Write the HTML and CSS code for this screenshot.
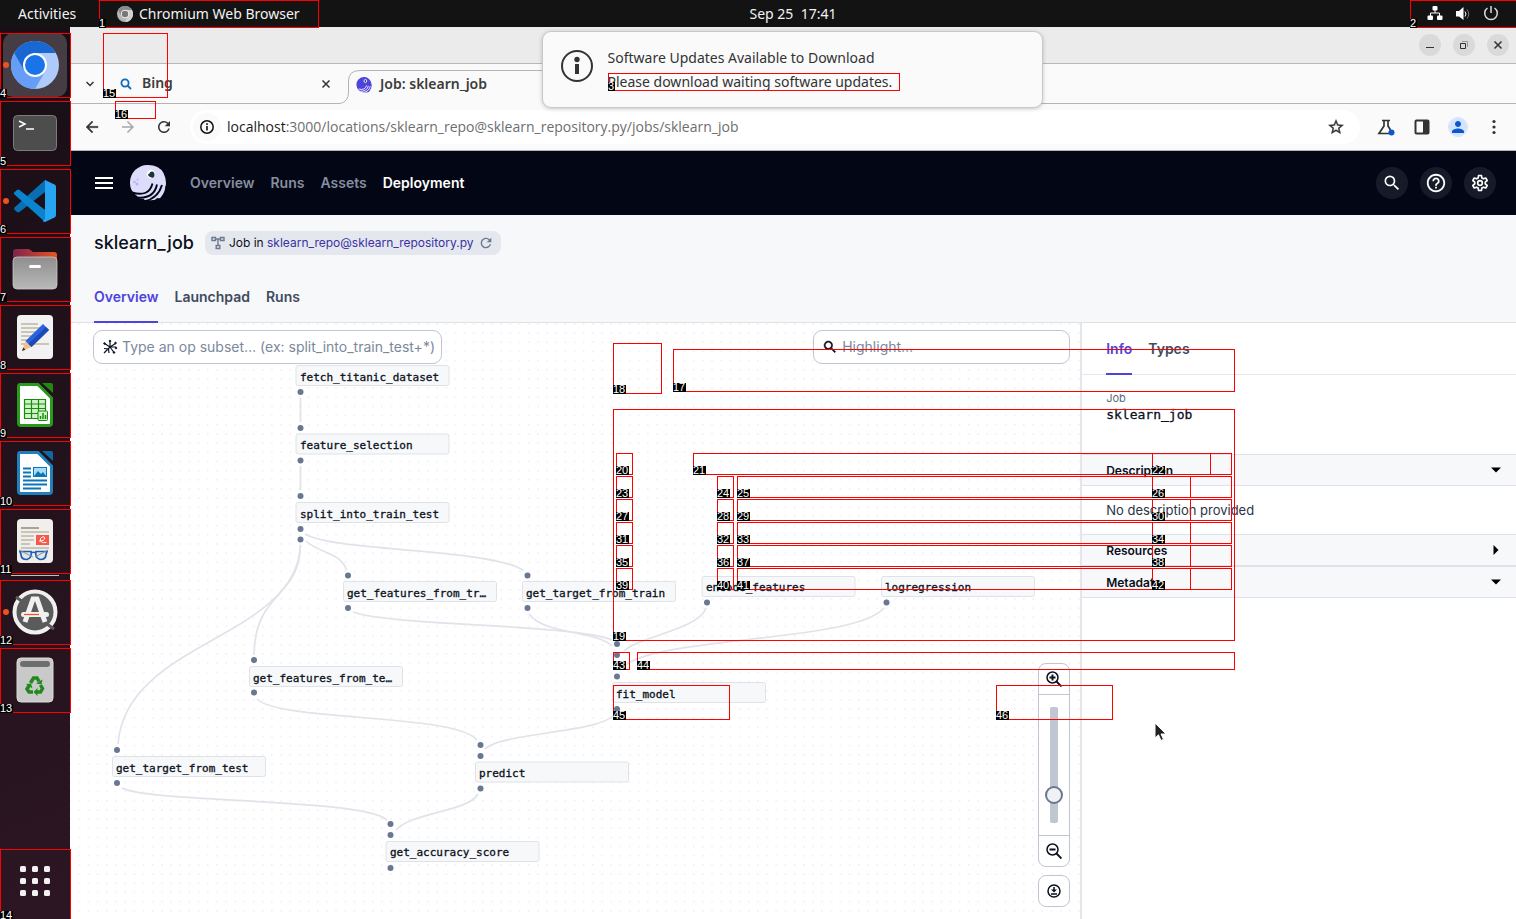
FILE: index.html
```html
<!DOCTYPE html>
<html lang="en">
<head>
    <meta charset="UTF-8">
    <meta name="viewport" content="width=device-width, initial-scale=1.0">
    <title>Job: sklearn_job</title>
    <link rel="stylesheet" href="styles.css">
</head>
<body>
    <header class="topbar">
        <button class="activities">Activities</button>
        <button class="app-menu">
            <svg width="16" height="16" viewBox="0 0 16 16"><circle cx="8" cy="8" r="8" fill="#b5b5b5"/><path d="M1 4A8 8 0 0 1 15 4H8v4l-3.500 2z" fill="#8a8a8a"/><path d="M15 4A8 8 0 0 1 8 16l3.500-6L8 4z" fill="#d2d2d2"/><circle cx="8" cy="8" r="4.200" fill="#eee"/><circle cx="8" cy="8" r="3.200" fill="#777"/></svg>
            Chromium Web Browser
        </button>
        <span class="clock">Sep 25&nbsp; 17:41</span>
        <button class="tray" aria-label="System menu">
            <svg width="16" height="16" viewBox="0 0 16 16" fill="#fff"><rect x="5.500" y="0" width="5" height="4.500" rx="1"/><rect x="0.500" y="9.500" width="5.500" height="4.500" rx="1"/><rect x="10" y="9.500" width="5.500" height="4.500" rx="1"/><path d="M8 4v3M3.500 10V7h9v3" stroke="#fff" fill="none"/></svg>
            <svg width="16" height="16" viewBox="0 0 16 16" fill="#fff"><path d="M1 5h3L8.500 1v13L4 10.500H1z"/><path d="M10 5.500q2 2.500 0 5" stroke="#fff" fill="none"/><path d="M12 3.500q3.500 4.500 0 9" stroke="#777" fill="none"/></svg>
            <svg width="16" height="16" viewBox="0 0 16 16" fill="none" stroke="#ddd" stroke-width="1.500"><path d="M8 0v7M4.500 2A6.300 6.300 0 1 0 11.500 2"/></svg>
        </button>
    </header>

    <div class="desktop">
        <nav class="dock">
            <button class="dock-item focused running" aria-label="Chromium">
                <svg width="48" height="48" viewBox="0 0 48 48"><circle cx="24" cy="24" r="24" fill="#aecbfa"/><path d="M3.200 12A24 24 0 0 0 24 48L34.400 30 24 24z" fill="#669df6"/><path d="M3.200 12A24 24 0 0 1 44.800 12H24v12L13.600 30z" fill="#1967d2"/><circle cx="24" cy="24" r="12" fill="#fff"/><circle cx="24" cy="24" r="10" fill="#1a73e8"/></svg>
            </button>
            <button class="dock-item" aria-label="Terminal">
                <svg width="48" height="48" viewBox="0 0 48 48"><rect x="2.500" y="6.500" width="43" height="35" rx="4" fill="#4d4d4d" stroke="#7c7c7c"/><path d="M8 12l6 3-6 3M15 20h8" stroke="#fff" stroke-width="1.500" fill="none"/></svg>
            </button>
            <button class="dock-item running" aria-label="Visual Studio Code">
                <svg width="48" height="48" viewBox="0 0 48 48"><path d="M34 3L3.500 30.500q-1 1.200 0 2.200L6 35q1.200.800 2.500 0L34 15z" fill="#0a6eb4"/><path d="M34 45L3.500 17.500q-1-1.200 0-2.200L6 13q1.200-.800 2.500 0L34 33z" fill="#0b84d0"/><path d="M34 3l9.500 4.500q1.500.800 1.500 2.500v28q0 1.700-1.500 2.500L34 45z" fill="#27a4f2"/><path d="M34 3v42q-1 .200-2.200-1l2.200-2z" fill="#27a4f2"/></svg>
            </button>
            <button class="dock-item" aria-label="Files">
                <svg width="48" height="48" viewBox="0 0 48 48"><defs><linearGradient id="folder"><stop offset="0" stop-color="#7b2352"/><stop offset="1" stop-color="#e95420"/></linearGradient><linearGradient id="gray" x2="0" y2="1"><stop offset="0" stop-color="#8e8e8e"/><stop offset="1" stop-color="#b9b9b9"/></linearGradient></defs><path d="M2 20V7q0-3 3-3h12q2 0 3 1.500L22 7h21q3 0 3 3v10z" fill="url(#folder)"/><rect x="2" y="12" width="44" height="32" rx="4" fill="url(#gray)" stroke="#c8c8c8" stroke-width=".800"/><rect x="18" y="20" width="12" height="3" rx="1.500" fill="#fff"/></svg>
            </button>
            <button class="dock-item" aria-label="Text Editor">
                <svg width="48" height="48" viewBox="0 0 48 48"><rect x="6" y="2" width="36" height="44" rx="4" fill="#f2f2f2"/><path d="M10 11h17M10 15h24M10 19h20M10 23h18M10 27h12M10 31h28" stroke="#c9c6b8" stroke-width="2"/><path d="M11 38l3.500-10 6 6z" fill="#f4c08a"/><path d="M14.500 28L32 11l6 6-17.500 17z" fill="#2a62e0"/><path d="M17.500 31L35 14l3 3-17.500 17z" fill="#1b49b5"/><path d="M11 38l1.200-3.500 2.300 2.300z" fill="#333"/></svg>
            </button>
            <button class="dock-item" aria-label="LibreOffice Calc">
                <svg width="48" height="48" viewBox="0 0 48 48"><path d="M9 3.500h18L40.500 17v25q0 2.500-2.500 2.500H10q-2.500 0-2.500-2.500V6q0-2.500 1.500-2.500z" fill="#fff" stroke="#2a9a1c" stroke-width="3"/><path d="M31 2h9q2 0 2 2v8z" fill="#23880f"/><rect x="13" y="18" width="22" height="20" fill="#ccf4c6"/><path d="M13.500 18.500h21v19h-21zM13.500 23h21M13.500 27.500h21M13.500 32.500h21M20.500 18.500v19M27.500 18.500v19" stroke="#1c8a0d" fill="none" stroke-width="1.200"/><rect x="27" y="30" width="9.500" height="9.500" rx="1" fill="#ccf4c6" stroke="#1c8a0d"/><path d="M29.500 38v-3M32 38v-6M34.500 38v-4" stroke="#1c8a0d" stroke-width="1.500"/></svg>
            </button>
            <button class="dock-item" aria-label="LibreOffice Writer">
                <svg width="48" height="48" viewBox="0 0 48 48"><path d="M9 3.500h18L40.500 17v25q0 2.500-2.500 2.500H10q-2.500 0-2.500-2.500V6q0-2.500 1.500-2.500z" fill="#fff" stroke="#1f80bd" stroke-width="3"/><path d="M31 2h9q2 0 2 2v8z" fill="#0f69a5"/><path d="M12 19.500h8M12 23.500h8M12 27.500h8M12 31.500h24M12 35.500h24M12 39.500h18" stroke="#0a75b8" stroke-width="2"/><rect x="22.500" y="18.500" width="13" height="9" fill="#a8dcf8" stroke="#0a75b8"/><path d="M23 27l4-5 3 3 2-2 3 4z" fill="#0a75b8"/></svg>
            </button>
            <button class="dock-item" aria-label="Document Viewer">
                <svg width="48" height="48" viewBox="0 0 48 48"><rect x="6" y="2" width="36" height="44" rx="4" fill="#f0efee"/><path d="M10 11h18" stroke="#ada28f" stroke-width="2"/><path d="M10 15h28M10 19h13M10 23h13M10 27h9M10 31h28" stroke="#c9c6b8" stroke-width="2"/><rect x="25" y="18" width="13" height="10" fill="#f6584c"/><path d="M28 24q6 0 5.500-3t-4 .500q-1 5 6 4" stroke="#fff" fill="none"/><path d="M9 34.500h11q1.500 6-4 8-6 0-6-5zM36 34.500H25q-1.500 6 4 8 6 0 6-5zM20 36q2.500-1.500 5 0" stroke="#1d5fb4" stroke-width="1.700" fill="#e3e6ea"/><path d="M8 33l14 7M37 33l-13 7" stroke="#8b9097" stroke-width="1"/></svg>
            </button>
            <hr class="dock-line">
            <button class="dock-item running" aria-label="Software Updater">
                <svg width="48" height="48" viewBox="0 0 48 48"><circle cx="24" cy="24" r="20.500" fill="#5b5b5b" stroke="#f0f0f0" stroke-width="4"/><path d="M5 9l7 5M36 36l7 5" stroke="#5b5b5b" stroke-width="3"/><path d="M14 34l8-23h4l8 23" stroke="#f0f0f0" stroke-width="5" fill="none"/><rect x="10" y="24" width="28" height="5" rx="2.500" fill="#f0f0f0"/><path d="M13 26.500h15" stroke="#e95420" stroke-width="1.200"/></svg>
            </button>
            <button class="dock-item" aria-label="Trash">
                <svg width="48" height="48" viewBox="0 0 48 48"><rect x="6" y="2" width="36" height="44" rx="4" fill="#c9c9c9" stroke="#dadada"/><rect x="9" y="5" width="30" height="6" rx="3" fill="#6e6e6e"/><g fill="none" stroke="#23891c" stroke-width="3.500"><path d="M19.500 27l3-5h3.500l2 3.500"/><path d="M29.500 29l2 3.500-2 3.500h-4"/><path d="M22 36h-4l-2-3 2.500-4"/></g><path d="M25 27.500l5.500 1 1-5zM26.500 32v8l-4-4zM15 28l5-.500 1.500 5z" fill="#23891c"/></svg>
            </button>
            <button class="dock-item show-apps" aria-label="Show Applications">
                <svg width="30" height="30" viewBox="0 0 30 30" fill="#f2f2f2"><rect width="6" height="6" rx="1.500"/><rect x="12" width="6" height="6" rx="1.500"/><rect x="24" width="6" height="6" rx="1.500"/><rect y="12" width="6" height="6" rx="1.500"/><rect x="12" y="12" width="6" height="6" rx="1.500"/><rect x="24" y="12" width="6" height="6" rx="1.500"/><rect y="24" width="6" height="6" rx="1.500"/><rect x="12" y="24" width="6" height="6" rx="1.500"/><rect x="24" y="24" width="6" height="6" rx="1.500"/></svg>
            </button>
        </nav>

        <div class="window">
            <div class="titlebar">
                <button aria-label="Minimize"><svg width="10" height="10" viewBox="0 0 10 10"><path d="M1 7.500h8" stroke="#333"/></svg></button>
                <button aria-label="Restore"><svg width="10" height="10" viewBox="0 0 10 10" fill="none"><path d="M1.500 3.500h5v5h-5z" stroke="#333"/><path d="M3 1.500h5.500V7" stroke="#999"/></svg></button>
                <button aria-label="Close"><svg width="10" height="10" viewBox="0 0 10 10"><path d="M1.500 1.500l7 7M8.500 1.500l-7 7" stroke="#333" stroke-width="1.500"/></svg></button>
            </div>

            <div class="tabstrip">
                <div class="tab tab-idle">
                    <button class="plain" aria-label="Search tabs"><svg width="10" height="10" viewBox="0 0 10 10"><path d="M1.500 3L5 6.500 8.500 3" stroke="#333" stroke-width="1.500" fill="none"/></svg></button>
                    <svg class="tab-icon" width="12" height="12" viewBox="0 0 12 12" fill="none" stroke="#0f6cbd" stroke-width="1.800"><circle cx="5" cy="5" r="3.600"/><path d="M7.500 7.500L11 11"/></svg>
                    <span class="tab-name">Bing</span>
                    <button class="plain tab-close" aria-label="Close tab"><svg width="10" height="10" viewBox="0 0 10 10"><path d="M1.500 1.500l7 7M8.500 1.500l-7 7" stroke="#333" stroke-width="1.500"/></svg></button>
                </div>
                <svg class="tab-curve" width="20" height="34" viewBox="0 0 20 34" fill="none" stroke="#b4b4b4"><path d="M0 33.500Q8.500 32 8.500 22V11Q8.500.500 20 .500"/></svg>
                <div class="tab tab-active">
                    <svg width="16" height="16" viewBox="0 0 36 36"><path d="M1 18A17 17 0 0 1 35 16q1 9-4 15l-2 3q-8 2-12 1Q2 31 1 18z" fill="#4f43dd"/><path d="M6 27q14 4 18-8M10 32q14 1 18-12M17 35q12-2 15-14" stroke="#fff" stroke-width="2" fill="none"/><circle cx="21" cy="9" r="4" fill="#fff"/><circle cx="21" cy="9" r="2" fill="#163b36"/></svg>
                    <span class="tab-name">Job: sklearn_job</span>
                </div>
                <div class="tab tab-rest"></div>
            </div>

            <div class="toolbar">
                <button class="plain" aria-label="Back"><svg width="18" height="18" viewBox="0 0 24 24" fill="#333" stroke="#333" stroke-width=".500"><path d="M20 11H7.830l5.590-5.590L12 4l-8 8 8 8 1.410-1.410L7.830 13H20v-2z"/></svg></button>
                <button class="plain" aria-label="Forward"><svg width="18" height="18" viewBox="0 0 24 24" fill="#a8a8a8"><path d="M4 11h12.170l-5.590-5.590L12 4l8 8-8 8-1.410-1.410L16.170 13H4v-2z"/></svg></button>
                <button class="plain" aria-label="Reload"><svg width="18" height="18" viewBox="0 0 24 24" fill="#333"><path d="M17.650 6.350A7.958 7.958 0 0 0 12 4c-4.420 0-7.990 3.580-7.990 8s3.570 8 7.990 8c3.730 0 6.840-2.550 7.730-6h-2.080A5.990 5.990 0 0 1 12 18c-3.310 0-6-2.690-6-6s2.690-6 6-6c1.660 0 3.140.690 4.220 1.780L13 11h7V4l-2.350 2.350z"/></svg></button>
                <div class="omnibox">
                    <button class="plain site-info" aria-label="Site information"><svg width="14" height="14" viewBox="0 0 14 14"><circle cx="7" cy="7" r="6.200" fill="none" stroke="#111" stroke-width="1.500"/><path d="M7 6v4.500M7 3.300V5" stroke="#111" stroke-width="1.600"/></svg></button>
                    <span class="url"><b>localhost</b>:3000/locations/sklearn_repo@sklearn_repository.py/jobs/sklearn_job</span>
                    <button class="plain" aria-label="Bookmark"><svg width="18" height="18" viewBox="0 0 24 24" fill="#333" stroke="#333" stroke-width=".500"><path d="M22 9.240l-7.190-.620L12 2 9.190 8.630 2 9.240l5.460 4.730L5.820 21 12 17.270 18.180 21l-1.630-7.030L22 9.240zM12 15.400l-3.760 2.270 1-4.280-3.320-2.880 4.380-.380L12 6.100l1.710 4.040 4.380.380-3.320 2.880 1 4.280L12 15.400z"/></svg></button>
                </div>
                <div class="tools">
                    <button class="plain" aria-label="Labs"><svg width="18" height="18" viewBox="0 0 18 18"><path d="M5 2.500h8M7 2.500V8L2 15.500h10M11 2.500V8l2.500 4" stroke="#333" stroke-width="1.700" fill="none"/><circle cx="14.500" cy="14.500" r="3" fill="#0b57d0"/></svg></button>
                    <button class="plain" aria-label="Side panel"><svg width="18" height="18" viewBox="0 0 18 18"><rect x="2.500" y="2.500" width="13" height="13" rx="1" fill="none" stroke="#333" stroke-width="2"/><path d="M10 2h6v14h-6z" fill="#333"/></svg></button>
                    <button class="plain avatar" aria-label="Profile"><svg width="18" height="18" viewBox="0 0 24 24" fill="#0b57d0"><path d="M12 12c2.210 0 4-1.790 4-4s-1.790-4-4-4-4 1.790-4 4 1.790 4 4 4zm0 2c-2.670 0-8 1.340-8 4v2h16v-2c0-2.660-5.330-4-8-4z"/></svg></button>
                    <button class="plain" aria-label="Menu"><svg width="18" height="18" viewBox="0 0 18 18" fill="#333"><circle cx="9" cy="3.500" r="1.600"/><circle cx="9" cy="9" r="1.600"/><circle cx="9" cy="14.500" r="1.600"/></svg></button>
                </div>
            </div>

            <header class="app-header">
                <button class="plain" aria-label="Navigation"><svg width="18" height="12" viewBox="0 0 18 12" fill="#fff"><path d="M0 0h18v2H0zM0 5h18v2H0zM0 10h18v2H0z"/></svg></button>
                <svg class="logo" width="36" height="36" viewBox="0 0 36 36"><path d="M0 18A17.500 17.500 0 0 1 18 0q11 0 15.500 8Q36 13 36 18q0 8-5 14-1 2-3 1l-1.500.500q-2 2-3 1.500l-8 .800-2-2-5-.800-2-2.500Q0 26 0 18z" fill="#dedcfb"/><path d="M2 27.500q17 5 20.500-9M7 32.500q17 1.500 20-13M14 36.500q14-3 18-16.500" stroke="#030615" stroke-width="1.900" fill="none"/><path d="M32.500 33Q36.500 27 36 21" stroke="#030615" stroke-width="1.500" fill="none"/><circle cx="21" cy="9" r="4.200" fill="#fff"/><path d="M18 10q0-1.500 1.500-1.500 0-2 2.500-2t2.500 3.500-3 2.500-3.500-2.500z" fill="#163b36"/><g fill="#b9b4f5"><circle cx="4.500" cy="17" r="1.300"/><circle cx="7.500" cy="14.500" r="1"/><circle cx="7" cy="19" r="1.500"/></g></svg>
                <nav class="app-nav">
                    <a href="#">Overview</a>
                    <a href="#">Runs</a>
                    <a href="#">Assets</a>
                    <a href="#" class="current">Deployment</a>
                </nav>
                <div class="round-buttons">
                    <button aria-label="Search"><svg width="20" height="20" viewBox="0 0 24 24" fill="#fff"><path d="M15.500 14h-.790l-.280-.270A6.471 6.471 0 0 0 16 9.500 6.500 6.500 0 1 0 9.500 16c1.610 0 3.090-.590 4.230-1.570l.270.280v.790l5 4.990L20.490 19l-4.990-5zm-6 0C7.010 14 5 11.990 5 9.500S7.010 5 9.500 5 14 7.010 14 9.500 11.990 14 9.500 14z"/></svg></button>
                    <button aria-label="Help"><svg width="22" height="22" viewBox="0 0 24 24" fill="#fff"><path d="M11 18h2v-2h-2v2zm1-16C6.480 2 2 6.480 2 12s4.480 10 10 10 10-4.480 10-10S17.520 2 12 2zm0 18c-4.410 0-8-3.590-8-8s3.590-8 8-8 8 3.590 8 8-3.590 8-8 8zm0-14c-2.210 0-4 1.790-4 4h2c0-1.100.900-2 2-2s2 .900 2 2c0 2-3 1.750-3 5h2c0-2.250 3-2.500 3-5 0-2.210-1.790-4-4-4z"/></svg></button>
                    <button aria-label="Settings"><svg width="20" height="20" viewBox="0 0 24 24" fill="none" stroke="#fff" stroke-width="2" stroke-linejoin="round"><path d="M10.300 3h3.400l.500 2.900 1.900 1.100 2.800-1 1.700 3-2.300 1.900v2.200l2.300 1.900-1.700 3-2.800-1-1.900 1.100-.500 2.900h-3.400l-.500-2.900L7.900 17l-2.800 1-1.700-3 2.300-1.900v-2.200L3.400 9l1.700-3 2.800 1 1.900-1.100z"/><circle cx="12" cy="12" r="2.800"/></svg></button>
                </div>
            </header>

            <div class="page-head">
                <div class="title-row">
                    <h1>sklearn_job</h1>
                    <div class="tag">
                        <svg width="14" height="14" viewBox="0 0 14 14" fill="none" stroke="#6b7890" stroke-width="1.400"><path d="M1 1.500h3.500v3H1zM9.500 1.500H13v3H9.500zM5.200 9.500h3.600v3H5.200zM4.500 3h5M7 3v6.500"/></svg>
                        <span>Job in <a href="#">sklearn_repo@sklearn_repository.py</a></span>
                        <button class="plain" aria-label="Reload location"><svg width="16" height="16" viewBox="0 0 24 24" fill="#6b7890"><path d="M17.650 6.350A7.958 7.958 0 0 0 12 4c-4.420 0-7.990 3.580-7.990 8s3.570 8 7.990 8c3.730 0 6.840-2.550 7.730-6h-2.080A5.990 5.990 0 0 1 12 18c-3.310 0-6-2.690-6-6s2.690-6 6-6c1.660 0 3.140.690 4.220 1.780L13 11h7V4l-2.350 2.350z"/></svg></button>
                    </div>
                </div>
                <nav class="page-tabs">
                    <a href="#" class="current">Overview</a>
                    <a href="#">Launchpad</a>
                    <a href="#">Runs</a>
                </nav>
            </div>

            <main class="content">
                <section class="canvas">
                    <svg class="graph" width="1010" height="596" viewBox="70 323 1010 596">
                        <defs>
                            <pattern id="dots" x="74.900" y="732" width="9.170" height="9.170" patternUnits="userSpaceOnUse"><circle cx="4.500" cy="4.500" r=".600" fill="#d5d8e0"/></pattern>
                        </defs>
                        <rect x="70" y="323" width="1010" height="596" fill="url(#dots)"/>
                        <g class="edges">
                            <path d="M300.500 398v24M300.500 466v24"/>
                            <path d="M305 534C335 552 490 548 523.500 570.500"/>
                            <path d="M306 541C318 553 341 552 346.500 570"/>
                            <path d="M300.500 545C299 600 255 590 254 655"/>
                            <path d="M300.500 545C296 640 126 640 118 744"/>
                            <path d="M353 612C390 626 575 624 612 640"/>
                            <path d="M529 614C545 635 595 630 612 646"/>
                            <path d="M706 608C698 630 640 636 624 651"/>
                            <path d="M884 608C856 642 660 636 624 666"/>
                            <path d="M613 716C595 733 500 733 485 749"/>
                            <path d="M257 699C280 722 455 713 477 740"/>
                            <path d="M122 788C150 803 362 798 387 820"/>
                            <path d="M478 794C468 812 412 812 396 830"/>
                        </g>
                        <g class="ports">
                            <circle cx="300.500" cy="392" r="3"/><circle cx="300.500" cy="428" r="3"/>
                            <circle cx="300.500" cy="460.500" r="3"/><circle cx="300.500" cy="496" r="3"/>
                            <circle cx="300.500" cy="529" r="3"/><circle cx="300.500" cy="539.500" r="3"/>
                            <circle cx="348" cy="575.500" r="3"/><circle cx="348" cy="608" r="3"/>
                            <circle cx="527.500" cy="575.500" r="3"/><circle cx="527.500" cy="608" r="3"/>
                            <circle cx="254" cy="660" r="3"/><circle cx="254" cy="692.500" r="3"/>
                            <circle cx="707" cy="602.500" r="3"/><circle cx="886.500" cy="602.500" r="3"/>
                            <circle cx="617" cy="644" r="3"/><circle cx="617" cy="655" r="3"/>
                            <circle cx="617" cy="666" r="3"/><circle cx="617" cy="676.500" r="3"/>
                            <circle cx="617" cy="709" r="3"/>
                            <circle cx="117" cy="750" r="3"/><circle cx="117" cy="783" r="3"/>
                            <circle cx="480.500" cy="745" r="3"/><circle cx="480.500" cy="756" r="3"/>
                            <circle cx="480.500" cy="788.500" r="3"/>
                            <circle cx="390.500" cy="824" r="3"/><circle cx="390.500" cy="835" r="3"/>
                            <circle cx="390.500" cy="868" r="3"/>
                        </g>
                        <g class="ops">
                            <rect x="296" y="365.500" width="153" height="20" rx="2"/><text x="300" y="381">fetch_titanic_dataset</text>
                            <rect x="296" y="434" width="153" height="20" rx="2"/><text x="300" y="449">feature_selection</text>
                            <rect x="296" y="502.500" width="153" height="20" rx="2"/><text x="300" y="518">split_into_train_test</text>
                            <rect x="343.500" y="581.500" width="153" height="20" rx="2"/><text x="347" y="597">get_features_from_tr…</text>
                            <rect x="522.500" y="581.500" width="153" height="20" rx="2"/><text x="526" y="597">get_target_from_train</text>
                            <rect x="249.500" y="666.500" width="153" height="20" rx="2"/><text x="253" y="682">get_features_from_te…</text>
                            <rect x="702" y="576.500" width="153" height="20" rx="2"/><text x="706" y="591">encode_features</text>
                            <rect x="881.500" y="576.500" width="153" height="20" rx="2"/><text x="885" y="591">logregression</text>
                            <rect x="612.500" y="682.500" width="153" height="20" rx="2"/><text x="616" y="698">fit_model</text>
                            <rect x="112.500" y="756.500" width="153" height="20" rx="2"/><text x="116" y="772">get_target_from_test</text>
                            <rect x="475.500" y="762" width="153" height="20" rx="2"/><text x="479" y="777">predict</text>
                            <rect x="386" y="841.500" width="153" height="20" rx="2"/><text x="390" y="856">get_accuracy_score</text>
                        </g>
                    </svg>

                    <div class="canvas-top">
                        <label class="field subset">
                            <svg width="16" height="16" viewBox="0 0 16 16" stroke="#0b1020" fill="#0b1020"><path d="M8 8V2M8 8L2.500 4.500M8 8l5.500-3.500M8 8h6M8 8l4 5.500M8 8l-6 6M2 9.500l4.500.500.500 4" stroke-width="1.200" fill="none"/><circle cx="8" cy="2" r=".800"/><circle cx="2.500" cy="4.500" r=".800"/><circle cx="13.500" cy="4" r=".800"/><circle cx="14" cy="9" r=".800"/><circle cx="12" cy="13.500" r=".800"/></svg>
                            <input type="text" aria-label="Op subset" placeholder="Type an op subset… (ex: split_into_train_test+*)">
                        </label>
                        <label class="field highlight">
                            <svg width="16" height="16" viewBox="0 0 24 24" fill="#0b1020" stroke="#0b1020" stroke-width=".700"><path d="M15.500 14h-.790l-.280-.270A6.471 6.471 0 0 0 16 9.500 6.500 6.500 0 1 0 9.500 16c1.610 0 3.090-.590 4.230-1.570l.270.280v.790l5 4.990L20.490 19l-4.990-5zm-6 0C7.010 14 5 11.990 5 9.500S7.010 5 9.500 5 14 7.010 14 9.500 11.990 14 9.500 14z"/></svg>
                            <input type="text" aria-label="Highlight" placeholder="Highlight…">
                        </label>
                    </div>

                    <div class="zoom-controls">
                        <div class="zoom-box">
                            <button aria-label="Zoom in"><svg width="16" height="16" viewBox="0 0 16 16" fill="none" stroke="#0b1020"><circle cx="6.500" cy="6.500" r="5.500" stroke-width="1.500"/><path d="M3.500 6.500h6M6.500 3.500v6M10.500 10.500l5 5" stroke-width="1.900"/></svg></button>
                            <div class="slider-wrap"><input type="range" aria-label="Zoom" min="0" max="100" value="19"></div>
                            <button aria-label="Zoom out"><svg width="16" height="16" viewBox="0 0 16 16" fill="none" stroke="#0b1020"><circle cx="6.500" cy="6.500" r="5.500" stroke-width="1.500"/><path d="M3.500 6.500h6M10.500 10.500l5 5" stroke-width="1.900"/></svg></button>
                        </div>
                        <button class="download" aria-label="Download"><svg width="14" height="14" viewBox="0 0 14 14" fill="none" stroke="#0b1020" stroke-width="1.500"><circle cx="7" cy="7" r="6"/><path d="M7 3v3M4 10h6"/><path d="M4 5.500h6L7 8.500z" fill="#0b1020" stroke="none"/></svg></button>
                    </div>
                </section>

                <aside class="side">
                    <nav class="side-tabs">
                        <a href="#" class="current">Info</a>
                        <a href="#">Types</a>
                    </nav>
                    <div class="job">
                        <div class="kind">Job</div>
                        <div class="job-name">sklearn_job</div>
                    </div>
                    <button class="section">Description<svg width="10" height="10" viewBox="0 0 10 10"><path d="M0 2.500h10L5 7.500z"/></svg></button>
                    <p class="section-body">No description provided</p>
                    <button class="section">Resources<svg width="10" height="10" viewBox="0 0 10 10"><path d="M2.500 0v10l5-5z"/></svg></button>
                    <button class="section">Metadata<svg width="10" height="10" viewBox="0 0 10 10"><path d="M0 2.500h10L5 7.500z"/></svg></button>
                </aside>
            </main>
        </div>
    </div>

    <div class="notice-layer">
        <div class="notice">
            <svg width="32" height="32" viewBox="0 0 32 32"><circle cx="16" cy="16" r="15" fill="none" stroke="#333" stroke-width="2"/><circle cx="16" cy="9.500" r="2.700" fill="#333"/><path d="M14 14h4v10h-4z" fill="#333"/></svg>
            <div>
                <div class="notice-title">Software Updates Available to Download</div>
                <div class="notice-text">Please download waiting software updates.</div>
            </div>
        </div>
    </div>

    <div class="marks" id="marks"></div>
    <svg class="cursor" width="14" height="20" viewBox="0 0 14 20"><path d="M1 1v15l3.500-3.200 2.500 5.700 2.500-1.200L7 12h5z" fill="#222" stroke="#fff"/></svg>
    <script src="script.js"></script>
</body>
</html>
```

FILE: styles.css
```css
* {
    box-sizing: border-box;
}
body {
    margin: 0;
    min-height: 100vh;
    display: flex;
    flex-direction: column;
    position: relative;
    overflow: hidden;
    font-family: Inter, sans-serif;
    font-size: 14px;
    color: #0b1020;
    background: #fff;
}
button {
    font-family: inherit;
    border: none;
    padding: 0;
    cursor: pointer;
}
a {
    text-decoration: none;
    color: inherit;
}
svg {
    display: block;
    flex: none;
}
.plain {
    background: none;
    display: flex;
    align-items: center;
    justify-content: center;
}

/* system bar */
.topbar {
    height: 27px;
    background: #131313;
    color: #f2f2f2;
    display: grid;
    grid-template-columns: 70px 1fr auto 1fr;
    align-items: center;
    font-family: "Noto Sans", sans-serif;
    font-size: 14px;
    white-space: nowrap;
}
.topbar button {
    background: none;
    color: inherit;
    font-size: 14px;
}
.activities {
    padding-left: 18px;
    text-align: left;
}
.app-menu {
    display: flex;
    align-items: center;
    gap: 6px;
    padding-left: 47px;
}
.tray {
    display: flex;
    justify-content: flex-end;
    gap: 12px;
    padding-right: 17px;
}

/* dock */
.desktop {
    flex: 1;
    display: flex;
}
.dock {
    width: 70px;
    flex: none;
    padding: 6px 3px;
    display: flex;
    flex-direction: column;
    gap: 4px;
    background: linear-gradient(160deg, #190e15, #2c1623);
}
.dock-item {
    position: relative;
    height: 64px;
    border-radius: 10px;
    background: none;
    display: flex;
    align-items: center;
    justify-content: center;
}
.focused {
    background: #463c43;
}
.running::before {
    content: "";
    position: absolute;
    left: 0;
    top: 29px;
    width: 6px;
    height: 6px;
    border-radius: 50%;
    background: #e95420;
}
.dock-line {
    width: 48px;
    height: 1px;
    margin: -2px auto 0;
    border: none;
    background: #c4c0c2;
}
.show-apps {
    margin-top: auto;
}

/* browser chrome */
.window {
    flex: 1;
    min-width: 0;
    display: flex;
    flex-direction: column;
}
.titlebar {
    height: 37px;
    background: #ebebeb;
    border-bottom: 1px solid #b9b9b9;
    display: flex;
    justify-content: flex-end;
    align-items: center;
    gap: 12px;
    padding-right: 7px;
}
.titlebar button {
    width: 22px;
    height: 22px;
    border-radius: 50%;
    background: #dadada;
    display: flex;
    align-items: center;
    justify-content: center;
}
.tabstrip {
    height: 40px;
    padding-top: 6px;
    background: #fafafa;
    display: flex;
    font-family: "Noto Sans", sans-serif;
}
.tab {
    display: flex;
    align-items: center;
}
.tab-idle {
    width: 270px;
    border-bottom: 1px solid #b4b4b4;
    padding: 0 9px 6px 15px;
}
.tab-icon {
    margin-left: 25px;
}
.tab-name {
    padding-bottom: 2px;
    font-size: 14px;
    font-weight: 600;
    color: #3c3c3c;
}
.tab-icon + .tab-name {
    margin-left: 10px;
}
.tab-close {
    margin-left: auto;
}
.tab-active {
    width: 240px;
    gap: 8px;
    padding-bottom: 6px;
    border-top: 1px solid #b4b4b4;
}
.tab-active svg {
    margin-left: -4px;
}
.tab-rest {
    flex: 1;
    border-bottom: 1px solid #b4b4b4;
}
.toolbar {
    height: 47px;
    background: #fafafa;
    border-bottom: 1px solid #b4b4b4;
    display: flex;
    align-items: center;
    gap: 18px;
    padding: 0 13px;
}
.omnibox {
    flex: 1;
    height: 34px;
    margin: 0 -1px;
    border-radius: 17px;
    background: #fff;
    display: flex;
    align-items: center;
    gap: 6px;
    padding: 0 15px 0 3px;
    font-family: "Open Sans", sans-serif;
}
.site-info {
    width: 28px;
    height: 28px;
    border-radius: 50%;
    background: #fafafa;
}
.url {
    flex: 1;
    padding-bottom: 2px;
    font-size: 14px;
    color: #6e6e6e;
}
.url b {
    font-weight: 400;
    color: #1a1a1a;
}
.tools {
    display: flex;
    align-items: center;
    gap: 18px;
}
.avatar svg {
    border-radius: 50%;
    background: #d3e3fd;
    outline: 1px solid #d3e3fd;
}

/* app header */
.app-header {
    height: 64px;
    background: #030615;
    display: flex;
    align-items: center;
    padding: 0 20px 0 25px;
}
.logo {
    margin: 0 24px 0 17px;
}
.app-nav {
    display: flex;
    gap: 16px;
    padding-bottom: 2px;
    font-weight: 600;
    color: #868e9f;
}
.app-nav .current {
    color: #fff;
}
.round-buttons {
    margin-left: auto;
    display: flex;
    gap: 12px;
}
.round-buttons button {
    width: 32px;
    height: 32px;
    border-radius: 50%;
    background: #171b29;
    display: flex;
    align-items: center;
    justify-content: center;
}

/* page heading */
.page-head {
    background: #f6f8fa;
    border-bottom: 1px solid #dde1e8;
    padding: 16px 24px 0;
}
.title-row {
    display: flex;
    align-items: center;
    gap: 11px;
    height: 24px;
}
h1 {
    margin: 0;
    padding-bottom: 2px;
    font-size: 18px;
    font-weight: 500;
}
.tag {
    height: 24px;
    padding: 0 7px 0 6px;
    border-radius: 8px;
    background: #e4e8ee;
    display: flex;
    align-items: center;
    gap: 4px;
    font-size: 12px;
}
.tag span {
    padding-bottom: 2px;
}
.tag a {
    color: #3b30a5;
}
.page-tabs {
    display: flex;
    gap: 16px;
    margin: 17px 0 -1px;
    font-weight: 600;
    color: #414b5e;
}
.page-tabs a {
    height: 51px;
    line-height: 50px;
}
.page-tabs .current,
.side-tabs .current {
    color: #4f43dd;
    border-bottom: 2px solid #4f43dd;
}

/* graph */
.content {
    flex: 1;
    display: flex;
}
.canvas {
    flex: 1;
    min-width: 0;
    position: relative;
    overflow: hidden;
}
.graph {
    position: absolute;
    left: 0;
    top: 0;
}
.edges {
    fill: none;
    stroke: #e2e2ea;
    stroke-width: 1.7;
}
.ports {
    fill: #687892;
}
.ops rect {
    fill: #f6f8fa;
    stroke: #dfe2e8;
}
.ops text {
    font-family: "DejaVu Sans Mono", monospace;
    font-size: 11px;
    fill: #0b1020;
    stroke: #0b1020;
    stroke-width: 0.3;
}
.canvas-top {
    position: relative;
    display: flex;
    justify-content: space-between;
    padding: 7px 10px 0 23px;
}
.field {
    height: 34px;
    display: flex;
    align-items: center;
    gap: 4px;
    padding: 0 5px 0 8px;
    border: 1px solid #c1c5d3;
    border-radius: 9px;
    background: #fff;
}
.subset {
    width: 349px;
}
.highlight {
    width: 257px;
}
.field input {
    flex: 1;
    min-width: 0;
    padding: 0 0 2px;
    border: none;
    outline: none;
    background: none;
    font-family: inherit;
    font-size: 14px;
}
.field input::placeholder {
    color: #7c889c;
}
.zoom-controls {
    position: absolute;
    right: 10px;
    bottom: 12px;
    width: 32px;
    display: flex;
    flex-direction: column;
    gap: 8px;
}
.zoom-box,
.download {
    border: 1px solid #c1c5d3;
    border-radius: 8px;
    background: #fff;
}
.zoom-box button,
.download {
    height: 30px;
    width: 100%;
    background: none;
    display: flex;
    align-items: center;
    justify-content: center;
}
.download {
    height: 32px;
    border: 1px solid #c1c5d3;
    background: #fff;
}
.slider-wrap {
    border: solid #c1c5d3;
    border-width: 1px 0;
    height: 142px;
    padding: 12px 0;
    display: flex;
    justify-content: center;
}
.slider-wrap input {
    appearance: none;
    writing-mode: vertical-lr;
    direction: rtl;
    width: 18px;
    height: 116px;
    margin: 0;
    background: none;
}
.slider-wrap input::-webkit-slider-runnable-track {
    width: 8px;
    border-radius: 2px;
    background: #c1c7d0;
}
.slider-wrap input::-webkit-slider-thumb {
    appearance: none;
    width: 18px;
    height: 18px;
    margin-left: -5px;
    border: 2px solid #687892;
    border-radius: 50%;
    background: #eff1f4;
}

/* side panel */
.side {
    width: calc(30% + 2px);
    border-left: 2px solid #e4e6ec;
    background: #fff;
}
.side-tabs {
    height: 52px;
    padding-left: 24px;
    border-bottom: 1px solid #e4e6ec;
    display: flex;
    gap: 16px;
    font-weight: 600;
    color: #414b5e;
}
.side-tabs a {
    height: 52px;
    line-height: 52px;
}
.job {
    height: 79px;
    padding: 15px 24px 0;
}
.kind {
    font-size: 11px;
    line-height: 16px;
    color: #5c687c;
}
.job-name {
    font-family: "DejaVu Sans Mono", monospace;
    font-size: 13px;
    line-height: 18px;
    -webkit-text-stroke: 0.3px #0b1020;
}
.section {
    width: 100%;
    height: 32px;
    padding: 0 15px 0 24px;
    border: solid #dfe2e8;
    border-width: 1px 0;
    background: #f6f8fa;
    color: #0b1020;
    font-size: 12px;
    font-weight: 600;
    display: flex;
    align-items: center;
    justify-content: space-between;
}
.section-body {
    margin: 0;
    padding: 0 24px;
    font-size: 13px;
    line-height: 48px;
    color: #2b3345;
}

/* update notification */
.notice-layer {
    position: absolute;
    left: 70px;
    right: 2px;
    top: 31px;
    display: flex;
    justify-content: center;
}
.notice {
    width: 501px;
    height: 77px;
    padding: 14px 18px 0;
    border: 1px solid #c8c8c8;
    border-radius: 9px;
    background: #fafafa;
    box-shadow: 0 1px 4px rgba(0, 0, 0, 0.2);
    display: flex;
    gap: 15px;
    font-family: "Noto Sans", sans-serif;
    font-size: 14px;
    line-height: 24px;
    color: #333;
}
.notice svg {
    margin-top: 4px;
}

/* numbered boxes */
.marks {
    position: absolute;
    inset: 0;
    overflow: hidden;
    pointer-events: none;
}
.mark {
    position: absolute;
    border: 1px solid #f00;
    display: flex;
    align-items: flex-end;
}
.mark span {
    margin: 0 0 -1px -1px;
    padding-right: 1px;
    height: 9px;
    background: #000;
    color: #fff;
    font-family: "Liberation Sans", sans-serif;
    font-size: 11px;
    line-height: 9px;
}
.cursor {
    position: absolute;
    left: 1154px;
    top: 722px;
}
```

FILE: script.js
```js
// number, left, top, width, height
const marks = [
    [1, 99, 0, 220, 28], [2, 1410, 0, 107, 28], [3, 608, 73, 292, 18],
    [4, 0, 33, 71, 65], [5, 0, 101, 71, 65], [6, 0, 169, 71, 65],
    [7, 0, 237, 71, 65], [8, 0, 305, 71, 65], [9, 0, 373, 71, 65],
    [10, 0, 441, 71, 65], [11, 0, 509, 71, 65], [12, 0, 580, 71, 65],
    [13, 0, 648, 71, 65], [14, 0, 849, 71, 71], [15, 103, 33, 65, 65],
    [16, 115, 101, 41, 18], [17, 673, 349, 562, 43], [18, 613, 343, 49, 51],
    [19, 613, 409, 622, 232], [20, 616, 453, 17, 22], [21, 693, 453, 518, 22],
    [22, 1152, 453, 80, 22], [43, 613, 652, 17, 18], [44, 637, 652, 598, 18],
    [45, 613, 685, 117, 35], [46, 996, 685, 117, 35]
];

// five rows of four boxes each
for (let row = 0; row < 5; row++) {
    const n = 23 + row * 4;
    const y = 476 + row * 23;
    marks.push([n, 616, y, 17, 22], [n + 1, 717, y, 17, 22], [n + 2, 737, y, 454, 22], [n + 3, 1152, y, 80, 22]);
}

const layer = document.getElementById('marks');
marks.forEach(([n, x, y, w, h]) => {
    const box = document.createElement('div');
    box.className = 'mark';
    box.style.cssText = `left:${x}px;top:${y}px;width:${w}px;height:${h}px`;
    const label = document.createElement('span');
    label.textContent = n;
    box.appendChild(label);
    layer.appendChild(box);
});
```
